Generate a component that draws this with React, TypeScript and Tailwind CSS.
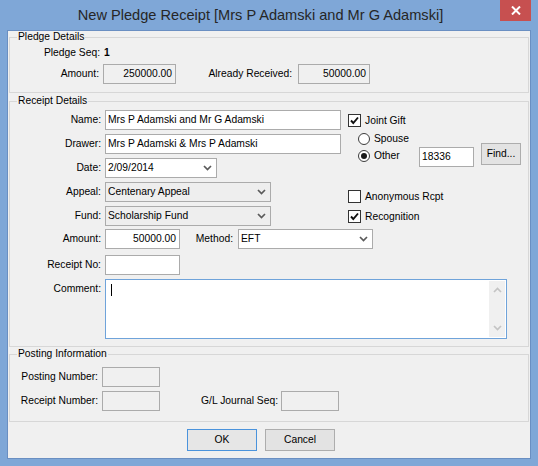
import React from "react";

function Chevron() {
  return (
    <svg width="9" height="6" viewBox="0 0 9 6" className="shrink-0">
      <polyline points="1,1 4.5,4.5 8,1" fill="none" stroke="#5a5a5a" strokeWidth="1.7" />
    </svg>
  );
}

function TextBox({
  w,
  value = "",
  right = false,
  ro = false,
}: {
  w: string;
  value?: string;
  right?: boolean;
  ro?: boolean;
}) {
  return (
    <div
      className={`${w} h-[20px] border border-[#ababab] flex items-center ${
        right ? "justify-end pr-[3px]" : "pl-[2px]"
      } ${ro ? "bg-[#f0f0f0]" : "bg-white"} shrink-0`}
    >
      <span className="whitespace-nowrap">{value}</span>
    </div>
  );
}

function Combo({ w, value, gray = false }: { w: string; value: string; gray?: boolean }) {
  return (
    <div
      className={`${w} h-[20px] border border-[#ababab] flex items-center justify-between pl-[2px] pr-[4px] ${
        gray ? "bg-[#eeeeee]" : "bg-white"
      } shrink-0`}
    >
      <span className="whitespace-nowrap">{value}</span>
      <Chevron />
    </div>
  );
}

function Checkbox({ checked, label }: { checked: boolean; label: string }) {
  return (
    <div className="flex items-center h-[13px]">
      <div className="w-[13px] h-[13px] border border-[#333333] bg-white flex items-center justify-center shrink-0">
        {checked && (
          <svg width="11" height="11" viewBox="0 0 11 11">
            <path d="M2 5.5 L4.3 8 L9 2.5" fill="none" stroke="#111" strokeWidth="1.9" />
          </svg>
        )}
      </div>
      <span className="ml-[4px] whitespace-nowrap">{label}</span>
    </div>
  );
}

function Radio({ checked, label }: { checked: boolean; label: string }) {
  return (
    <div className="flex items-center h-[12px]">
      <div className="w-[12px] h-[12px] rounded-full border border-[#3c3c3c] bg-white flex items-center justify-center shrink-0">
        {checked && <div className="w-[6px] h-[6px] rounded-full bg-[#1a1a1a]" />}
      </div>
      <span className="ml-[4px] whitespace-nowrap">{label}</span>
    </div>
  );
}

function Label({ w, children, cls = "" }: { w: string; children: React.ReactNode; cls?: string }) {
  return <div className={`${w} text-right shrink-0 whitespace-nowrap ${cls}`}>{children}</div>;
}

export default function App() {
  return (
    <div className="w-[538px] h-[466px] bg-[#7fa7d7] flex flex-col font-['Liberation_Sans',Arial,sans-serif] text-[10.3px] leading-[12px] text-black">
      {/* Title bar */}
      <div className="h-[30px] flex items-start shrink-0">
        <div className="w-[500px] h-[30px] pl-[21px] flex items-center justify-center text-[14.6px] text-[#262626] whitespace-nowrap">
          New Pledge Receipt [Mrs P Adamski and Mr G Adamski]
        </div>
        <div className="w-[31px] h-[21px] bg-[#c75050] flex items-center justify-center">
          <svg width="10" height="9" viewBox="0 0 10 9">
            <path d="M1 0.5 L9 8.5 M9 0.5 L1 8.5" stroke="#fff" strokeWidth="2" />
          </svg>
        </div>
      </div>

      {/* Client area */}
      <div className="ml-[7px] w-[524px] h-[429px] border border-[#6a8fc2] bg-[#f0f0f0] flex flex-col">
        {/* Pledge Details */}
        <fieldset className="mx-[1px] border border-[#d7d7d7] pt-[3px] pb-[8px]">
          <legend className="ml-[7px] px-[1px] leading-[12px]">Pledge Details</legend>
          <div className="h-[14px] flex items-center">
            <Label w="w-[90px]">Pledge Seq:</Label>
            <span className="ml-[4px] font-bold">1</span>
          </div>
          <div className="mt-[4px] h-[20px] flex items-center">
            <Label w="w-[89px]">Amount:</Label>
            <div className="ml-[4px]">
              <TextBox w="w-[73px]" value="250000.00" right ro />
            </div>
            <Label w="w-[116px]">Already Received:</Label>
            <div className="ml-[6px]">
              <TextBox w="w-[72px]" value="50000.00" right ro />
            </div>
          </div>
        </fieldset>

        {/* Receipt Details */}
        <fieldset className="mt-[2px] mx-[1px] border border-[#d7d7d7] pt-[3px] pb-[7px]">
          <legend className="ml-[7px] px-[1px] leading-[12px]">Receipt Details</legend>
          <div className="flex">
            <div className="w-[331px] flex flex-col gap-[4px]">
              <div className="h-[20px] flex items-center">
                <Label w="w-[91px]">Name:</Label>
                <div className="ml-[4px]">
                  <TextBox w="w-[236px]" value="Mrs P Adamski and Mr G Adamski" />
                </div>
              </div>
              <div className="h-[20px] flex items-center">
                <Label w="w-[91px]">Drawer:</Label>
                <div className="ml-[4px]">
                  <TextBox w="w-[236px]" value="Mrs P Adamski & Mrs P Adamski" />
                </div>
              </div>
              <div className="h-[20px] flex items-center">
                <Label w="w-[91px]">Date:</Label>
                <div className="ml-[4px]">
                  <Combo w="w-[112px]" value="2/09/2014" />
                </div>
              </div>
              <div className="h-[20px] flex items-center">
                <Label w="w-[91px]">Appeal:</Label>
                <div className="ml-[4px]">
                  <Combo w="w-[166px]" value="Centenary Appeal" gray />
                </div>
              </div>
              <div className="h-[20px] flex items-center">
                <Label w="w-[91px]">Fund:</Label>
                <div className="ml-[4px]">
                  <Combo w="w-[166px]" value="Scholarship Fund" gray />
                </div>
              </div>
            </div>
            <div className="ml-[7px] flex flex-col">
              <div className="mt-[4px]">
                <Checkbox checked label="Joint Gift" />
              </div>
              <div className="mt-[6px] ml-[10px]">
                <Radio checked={false} label="Spouse" />
              </div>
              <div className="mt-[-2px] ml-[10px] flex items-start">
                <div className="w-[61px] mt-[7px]">
                  <Radio checked label="Other" />
                </div>
                <div className="mt-[4px]">
                  <TextBox w="w-[55px]" value="18336" />
                </div>
                <div className="ml-[7px] w-[40px] h-[22px] border border-[#adadad] bg-[#e3e3e3] flex items-center justify-center">
                  Find...
                </div>
              </div>
              <div className="mt-[23px]">
                <Checkbox checked={false} label="Anonymous Rcpt" />
              </div>
              <div className="mt-[7px]">
                <Checkbox checked label="Recognition" />
              </div>
            </div>
          </div>

          <div className="mt-[3px] h-[20px] flex items-center">
            <Label w="w-[91px]">Amount:</Label>
            <div className="ml-[4px]">
              <TextBox w="w-[75px]" value="50000.00" right />
            </div>
            <Label w="w-[53px]">Method:</Label>
            <div className="ml-[5px]">
              <Combo w="w-[135px]" value="EFT" />
            </div>
          </div>
          <div className="mt-[6px] h-[20px] flex items-center">
            <Label w="w-[91px]">Receipt No:</Label>
            <div className="ml-[4px]">
              <TextBox w="w-[75px]" />
            </div>
          </div>
          <div className="mt-[4px] h-[60px] flex items-start">
            <Label w="w-[91px]" cls="pt-[4px]">Comment:</Label>
            <div className="ml-[4px] w-[402px] h-[60px] border border-[#6fa3da] bg-white flex">
              <div className="flex-1 pl-[5px] pt-[4px]">
                <div className="w-[1px] h-[12px] bg-black" />
              </div>
              <div className="w-[16px] my-[1px] mr-[1px] bg-[#f0f0f0] flex flex-col justify-between items-center py-[6px]">
                <svg width="9" height="6" viewBox="0 0 9 6">
                  <polyline points="1,5 4.5,1.5 8,5" fill="none" stroke="#c4c4c4" strokeWidth="1.7" />
                </svg>
                <svg width="9" height="6" viewBox="0 0 9 6">
                  <polyline points="1,1 4.5,4.5 8,1" fill="none" stroke="#c4c4c4" strokeWidth="1.7" />
                </svg>
              </div>
            </div>
          </div>
        </fieldset>

        {/* Posting Information */}
        <fieldset className="mt-[1px] mx-[1px] border border-[#d7d7d7] pt-[7px] pb-[10px]">
          <legend className="ml-[7px] px-[1px] leading-[12px]">Posting Information</legend>
          <div className="h-[20px] flex items-center">
            <Label w="w-[88px]">Posting Number:</Label>
            <div className="ml-[4px]">
              <TextBox w="w-[58px]" ro />
            </div>
          </div>
          <div className="mt-[4px] h-[20px] flex items-center">
            <Label w="w-[88px]">Receipt Number:</Label>
            <div className="ml-[4px]">
              <TextBox w="w-[58px]" ro />
            </div>
            <Label w="w-[118px]">G/L Journal Seq:</Label>
            <div className="ml-[3px]">
              <TextBox w="w-[58px]" ro />
            </div>
          </div>
        </fieldset>

        {/* Buttons */}
        <div className="mt-[7px] h-[22px] flex pl-[179px] gap-[8px]">
          <div className="w-[70px] h-[22px] border border-[#4a93dc] bg-[#e6e6e6] flex items-center justify-center">
            OK
          </div>
          <div className="w-[70px] h-[22px] border border-[#adadad] bg-[#e3e3e3] flex items-center justify-center">
            Cancel
          </div>
        </div>
      </div>
    </div>
  );
}
